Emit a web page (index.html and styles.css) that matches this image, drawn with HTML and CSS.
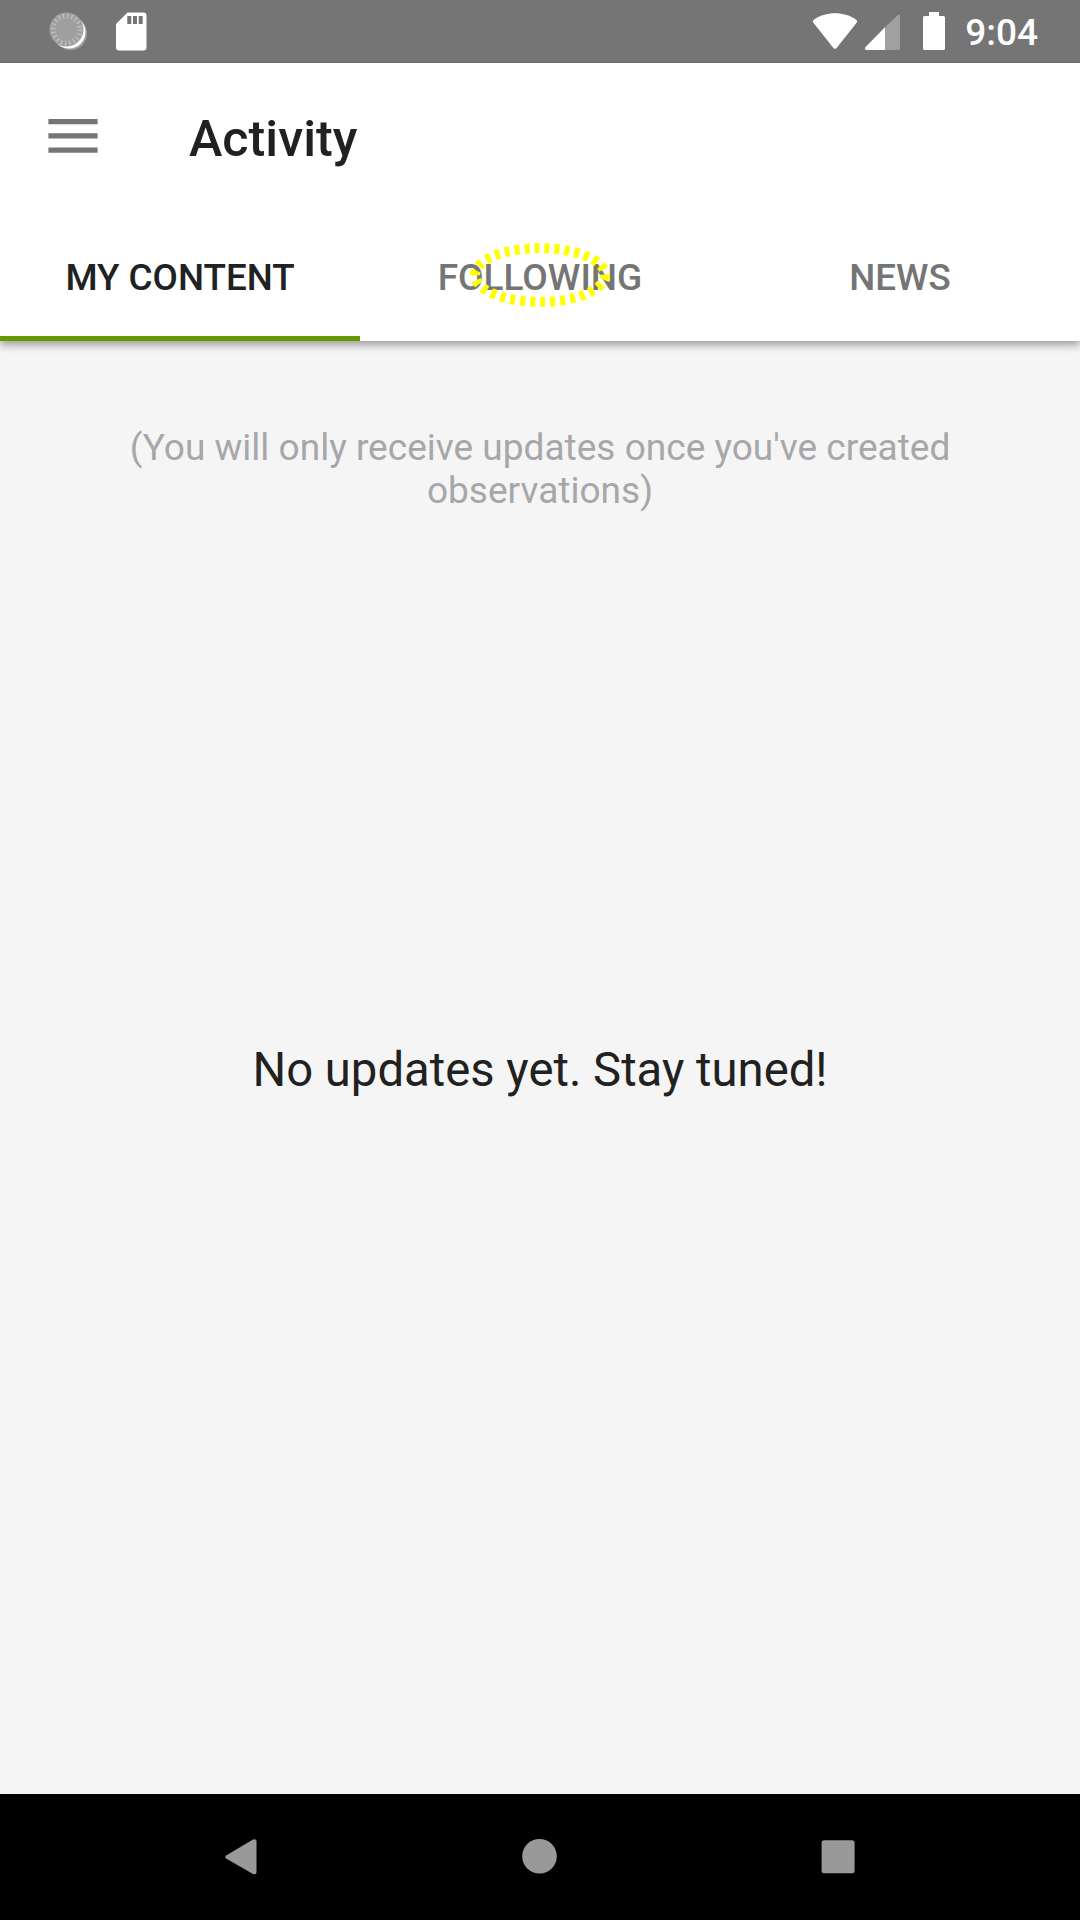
FILE: index.html
```html
<!DOCTYPE html>
<html lang="en">
<head>
<meta charset="utf-8">
<title>Activity</title>
<link rel="stylesheet" href="styles.css">
</head>
<body>
<div class="screen">
  <header class="status-bar">
    <svg class="status-left" viewBox="0 0 170 63" aria-hidden="true">
      <circle cx="70.500" cy="33.500" r="16.500" fill="#a0a0a0"/>
      <circle cx="69" cy="32" r="16.500" fill="#fff"/>
      <circle cx="66.500" cy="29.500" r="17" fill="#9f9f9f"/>
      <circle cx="66.500" cy="29.500" r="13.500" fill="none" stroke="#bcbcbc" stroke-width="5" stroke-dasharray="1.500 2.741"/>
      <path fill="#fff" d="M127.500 12.500h16a3 3 0 0 1 3 3v32a3 3 0 0 1-3 3H119a3 3 0 0 1-3-3V24z"/>
      <path fill="#757575" d="M127.300 16h4v8h-4zM133 16h4v8h-4zM138.700 16h4v8h-4z"/>
    </svg>
    <div class="status-right">
      <svg class="status-icons" viewBox="0 0 140 63" aria-hidden="true">
        <path fill="#fff" d="M3.200 22.600Q2 21 3.800 19.800C15 11 35 11 46.200 19.800Q48 21 46.800 22.600L26.800 47.800Q25 50 23.200 47.800z"/>
        <path fill="#a0a0a0" d="M75 27.300L87.800 15.300Q90 13.500 90 16V48.500Q90 50 88.500 50H75z"/>
        <path fill="#fff" d="M75 27.300V50H56.500Q54 49.500 55.500 47z"/>
        <path fill="#fff" d="M119 12h10v4h4.500q1.500 0 1.500 1.500v31q0 1.500-1.500 1.500h-19q-1.500 0-1.500-1.500v-31q0-1.500 1.500-1.500h4.500z"/>
      </svg>
      <span class="clock">9:04</span>
    </div>
  </header>
  <div class="app-bar">
    <div class="toolbar">
      <svg class="menu" viewBox="0 0 50 34" aria-label="Menu"><path fill="#757575" d="M.400 0h49.200v5.300H.400zM.400 14.200h49.200v5.300H.400zM.400 28.400h49.200v5.300H.400z"/></svg>
      <h1 class="title">Activity</h1>
    </div>
    <nav class="tabs">
      <div class="tab active">MY CONTENT</div>
      <div class="tab following">FOLLOWING
        <svg class="marker" viewBox="0 0 150 74" aria-hidden="true"><ellipse cx="75" cy="37" rx="65" ry="26.900" fill="none" stroke="#ff0" stroke-width="10" stroke-dasharray="5 5"/></svg>
      </div>
      <div class="tab">NEWS</div>
    </nav>
  </div>
  <main class="content">
    <p class="hint">(You will only receive updates once you've created observations)</p>
    <div class="empty">No updates yet. Stay tuned!</div>
  </main>
  <footer class="nav-bar">
    <svg viewBox="0 0 36 36" aria-label="Back"><path fill="#999" d="M2.500 16.200L29 .5Q32.500-.8 32.500 2.500V33Q32.500 36.300 29 35L2.500 19.800Q0 18 2.500 16.200z"/></svg>
    <svg viewBox="0 0 36 36" aria-label="Home"><circle cx="17.500" cy="17.300" r="17.300" fill="#999"/></svg>
    <svg viewBox="0 0 36 36" aria-label="Overview"><rect x="1.600" y="1.300" width="33" height="33" rx="2.500" fill="#999"/></svg>
  </footer>
</div>
</body>
</html>
```
FILE: styles.css
```css
* { box-sizing: border-box; }
body { margin: 0; font-family: Roboto, sans-serif; color: #212121; }
.screen { width: 1080px; height: 1920px; display: flex; flex-direction: column; background: #f5f5f5; overflow: hidden; }
.status-bar { height: 63px; flex: none; display: flex; justify-content: space-between; background: #757575; }
.status-left { width: 170px; height: 63px; }
.status-right { display: flex; padding-right: 42px; }
.status-icons { width: 140px; height: 63px; margin-right: 15px; }
.clock { font-size: 37px; font-weight: 500; line-height: 66px; color: #fff; }
.app-bar { height: 278px; flex: none; display: flex; flex-direction: column; justify-content: space-between; background: #fff; box-shadow: 0 4px 8px rgba(0, 0, 0, .36); z-index: 1; }
.toolbar { height: 147px; display: flex; align-items: center; padding-left: 48px; }
.menu { width: 50px; height: 34px; margin-bottom: 2px; }
.title { margin: 4px 0 0 91px; font-size: 50.3px; font-weight: 500; line-height: 60px; }
.tabs { height: 126px; display: grid; grid-template-columns: repeat(3, 1fr); }
.tab { position: relative; display: flex; align-items: center; justify-content: center; padding-bottom: 2px; font-size: 36.75px; font-weight: 500; color: #757575; }
.active { color: #212121; box-shadow: inset 0 -5px #690; }
.following { font-size: 37px; }
.marker { position: absolute; left: 105px; top: 23px; width: 150px; height: 74px; }
.content { flex: 1; display: flex; flex-direction: column; align-items: center; }
.hint { width: 860px; margin: 85px 0 0; font-size: 37.05px; line-height: 43px; text-align: center; color: #a7a7aa; }
.empty { margin-top: 530px; font-size: 47.25px; line-height: 56px; }
.nav-bar { height: 126px; flex: none; display: flex; justify-content: center; gap: 262px; padding-top: 45px; background: #000; }
.nav-bar svg { width: 36px; height: 36px; }
```
